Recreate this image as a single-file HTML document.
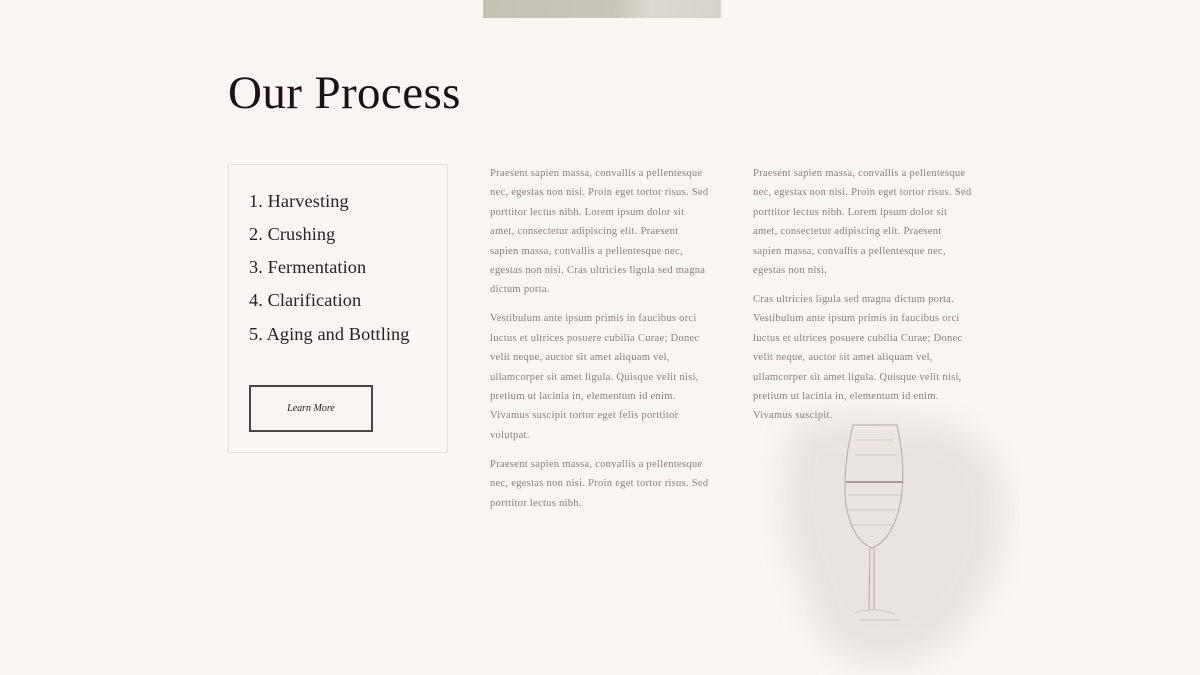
<!DOCTYPE html>
<html><head><meta charset="utf-8"><style>
body{margin:0;width:1200px;height:675px;background:#f9f5f2;position:relative;overflow:hidden;font-family:"Liberation Serif",serif;}
.top{position:absolute;left:483px;top:0;width:238px;height:18px;background:linear-gradient(100deg,#c4c0b4 0%,#c9c5ba 55%,#dcd9d0 70%,#d6d3ca 100%);}
h1{position:absolute;left:228px;top:66px;margin:0;font-weight:normal;font-size:47px;color:#1c1214;letter-spacing:0.4px;}
.box{position:absolute;left:228px;top:164px;width:220px;height:289px;border:1px solid #e6e0db;box-sizing:border-box;}
.li{position:absolute;left:249px;font-size:18.3px;color:#2a2022;letter-spacing:0.1px;}
.btn{position:absolute;left:249px;top:385px;width:124px;height:47px;border:2px solid #4a4446;box-sizing:border-box;font-size:10px;color:#2a2022;text-align:center;line-height:43px;font-style:italic;}
.col{position:absolute;font-size:10.6px;line-height:19.4px;color:#8a7f7d;white-space:nowrap;letter-spacing:0.25px;}
.col p{margin:0 0 9.6px 0;}
.glass{position:absolute;left:760px;top:400px;}
</style></head><body>
<div class="top"></div>
<h1>Our Process</h1>
<div class="box"></div>
<div class="li" style="top:191px">1. Harvesting</div>
<div class="li" style="top:224px">2. Crushing</div>
<div class="li" style="top:257px">3. Fermentation</div>
<div class="li" style="top:290px">4. Clarification</div>
<div class="li" style="top:324px">5. Aging and Bottling</div>
<div class="btn">Learn More</div>
<svg class="glass" width="260" height="275" viewBox="0 0 260 275">
<defs><filter id="b"><feGaussianBlur stdDeviation="14"/></filter></defs>
<path d="M30 30 Q80 5 150 20 Q230 20 245 90 Q250 160 215 210 Q180 270 110 265 Q50 250 45 190 Q10 130 30 30Z" fill="#e6e1dc" filter="url(#b)" opacity="0.8"/>
<g fill="none" stroke="#b5a9a6" stroke-width="1">
<path d="M93 25 L137 25 Q147 70 140 105 Q132 140 112 148 Q92 140 86 105 Q82 70 93 25Z"/>
<path d="M86 82 L143 82" stroke="#a89a96" stroke-width="2"/>
<path d="M88 95 L141 95 M88 110 L140 110 M92 125 L134 125 M96 40 L134 40 M95 55 L136 55" opacity="0.5"/>
<path d="M110 148 L109 210 M114 148 L114 210"/>
<path d="M95 213 Q112 206 135 214 M100 220 L140 220" opacity="0.6"/>
</g>
</svg>
<div class="col" style="left:490px;top:164px">
<p>Praesent sapien massa, convallis a pellentesque<br>nec, egestas non nisi. Proin eget tortor risus. Sed<br>porttitor lectus nibh. Lorem ipsum dolor sit<br>amet, consectetur adipiscing elit. Praesent<br>sapien massa, convallis a pellentesque nec,<br>egestas non nisi. Cras ultricies ligula sed magna<br>dictum porta.</p>
<p>Vestibulum ante ipsum primis in faucibus orci<br>luctus et ultrices posuere cubilia Curae; Donec<br>velit neque, auctor sit amet aliquam vel,<br>ullamcorper sit amet ligula. Quisque velit nisi,<br>pretium ut lacinia in, elementum id enim.<br>Vivamus suscipit tortor eget felis porttitor<br>volutpat.</p>
<p>Praesent sapien massa, convallis a pellentesque<br>nec, egestas non nisi. Proin eget tortor risus. Sed<br>porttitor lectus nibh.</p>
</div>
<div class="col" style="left:753px;top:164px">
<p>Praesent sapien massa, convallis a pellentesque<br>nec, egestas non nisi. Proin eget tortor risus. Sed<br>porttitor lectus nibh. Lorem ipsum dolor sit<br>amet, consectetur adipiscing elit. Praesent<br>sapien massa, convallis a pellentesque nec,<br>egestas non nisi.</p>
<p>Cras ultricies ligula sed magna dictum porta.<br>Vestibulum ante ipsum primis in faucibus orci<br>luctus et ultrices posuere cubilia Curae; Donec<br>velit neque, auctor sit amet aliquam vel,<br>ullamcorper sit amet ligula. Quisque velit nisi,<br>pretium ut lacinia in, elementum id enim.<br>Vivamus suscipit.</p>
</div>
</body></html>
